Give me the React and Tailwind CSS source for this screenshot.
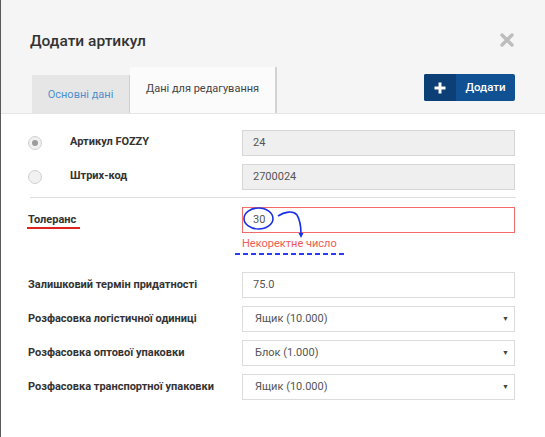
import React from "react";

function Radio({ checked }) {
  return (
    <span className="flex h-[14px] w-[14px] items-center justify-center rounded-full border border-[#d0d0d0] bg-[#f1f1f1]">
      {checked && <span className="h-[6px] w-[6px] rounded-full bg-[#9c9c9c]" />}
    </span>
  );
}

function Field({ children, className = "" }) {
  return (
    <div className={"flex h-[26px] w-[273px] items-center border text-[11px] text-[#555] " + className}>
      {children}
    </div>
  );
}

function SelectField({ value }) {
  return (
    <Field className="border-[#dcdcdc] bg-white pl-[12px] pr-[5px]">
      <span className="flex-1">{value}</span>
      <span className="text-[7px] text-[#444]">▼</span>
    </Field>
  );
}

function Row({ label, children }) {
  return (
    <div className="flex h-[26px] items-center">
      <div className="-ml-[2px] w-[214px] pb-[2px] text-[11px] font-bold leading-[13px] text-[#333]">{label}</div>
      {children}
    </div>
  );
}

export default function App() {
  return (
    <div
      className="relative h-[437px] w-[545px] overflow-hidden border-l border-[#5a5a5a] bg-white"
      style={{ fontFamily: "Roboto, 'Noto Sans', sans-serif" }}
    >
      {/* Header */}
      <div className="h-[114px] border-b border-[#e6e6e6] bg-[#f5f5f5] pl-[29px] pr-[30px]">
        <div className="flex items-center justify-between pt-[30px]">
          <h1 className="text-[15.5px] font-medium leading-[22px] text-[#333]">Додати артикул</h1>
          <svg width="14" height="14" viewBox="0 0 14 14" className="-mt-[3px] mr-[1px]">
            <path d="M2 2 L12 12 M12 2 L2 12" stroke="#bdbdbd" strokeWidth="3.4" strokeLinecap="round" />
          </svg>
        </div>
        <div className="mt-[15px] flex items-end justify-between">
          <div className="flex items-end">
            <div className="ml-[2px] flex h-[38px] w-[98px] items-center justify-center border-r border-[#cfcfcf] bg-[#e6e6e6] pt-[3px] text-[11px] text-[#4d8fcf]">
              Основні дані
            </div>
            <div className="flex h-[46px] w-[147px] items-center justify-center border-r-2 border-[#d2d2d2] bg-[#fbfbfb] pb-[2px] text-[11px] text-[#444]">
              Дані для редагування
            </div>
          </div>
          <button className="mb-[12px] flex h-[27px] w-[91px] overflow-hidden rounded-[2px] bg-[#0f5193] text-[11.5px] font-medium text-white">
            <span className="flex h-full w-[32px] items-center justify-center bg-[#0b3f75]">
              <svg width="12" height="12" viewBox="0 0 12 12">
                <path d="M6 0.5 V11.5 M0.5 6 H11.5" stroke="#fff" strokeWidth="3" />
              </svg>
            </span>
            <span className="flex flex-1 items-center justify-center">Додати</span>
          </button>
        </div>
      </div>

      {/* Body */}
      <div className="pl-[29px] pr-[30px] pt-[16px]">
        <div className="flex flex-col gap-[8px]">
          <div className="flex h-[26px] items-center">
            <div className="-ml-[2px] flex w-[214px] items-center">
              <Radio checked />
              <span className="ml-[28px] pb-[2px] text-[11px] font-bold text-[#333]">Артикул FOZZY</span>
            </div>
            <Field className="border-[#d6d6d6] bg-[#efefef] px-[10px]">24</Field>
          </div>
          <div className="flex h-[26px] items-center">
            <div className="-ml-[2px] flex w-[214px] items-center">
              <Radio />
              <span className="ml-[28px] pb-[2px] text-[11px] font-bold text-[#333]">Штрих-код</span>
            </div>
            <Field className="border-[#d6d6d6] bg-[#efefef] px-[10px]">2700024</Field>
          </div>
        </div>

        <div className="mt-[7px] h-px w-[486px] bg-[#dedede]" />

        <div className="relative mt-[9px]">
          <Row
            label={
              <span className="relative inline-block">
                Толеранс
                <span className="absolute -left-[1px] -right-[4px] top-[14px] h-[2px] bg-[#e0201b]" />
              </span>
            }
          >
            <Field className="border-[#f26b6b] bg-white px-[10px]">30</Field>
          </Row>
          <div className="ml-[212px] mt-[3px] text-[11px] leading-[15px] text-[#ee5b55]">Некоректне число</div>
          {/* annotations */}
          <svg className="pointer-events-none absolute left-[204px] top-[45px]" width="112" height="4" viewBox="0 0 112 4">
            <line x1="1" y1="2" x2="110" y2="2" stroke="#2b3df0" strokeWidth="2" strokeDasharray="5 3" />
          </svg>
          <svg className="pointer-events-none absolute left-[208px] top-[0px]" width="80" height="34" viewBox="0 0 80 34">
            <ellipse cx="20.5" cy="11.5" rx="14.5" ry="10.5" fill="none" stroke="#1830e8" strokeWidth="1.6" />
            <path d="M40 9 C46 5 55 3 59 8 C62 13 63 21 63 27" fill="none" stroke="#1830e8" strokeWidth="1.6" />
            <path d="M60.5 26 L63 31 L65.5 26 Z" fill="#1830e8" />
          </svg>
        </div>

        <div className="mt-[21px] flex flex-col gap-[8px]">
          <Row label="Залишковий термін придатності">
            <Field className="border-[#dcdcdc] bg-white px-[10px]">75.0</Field>
          </Row>
          <Row label="Розфасовка логістичної одиниці">
            <SelectField value="Ящик (10.000)" />
          </Row>
          <Row label="Розфасовка оптової упаковки">
            <SelectField value="Блок (1.000)" />
          </Row>
          <Row label="Розфасовка транспортної упаковки">
            <SelectField value="Ящик (10.000)" />
          </Row>
        </div>
      </div>
    </div>
  );
}
